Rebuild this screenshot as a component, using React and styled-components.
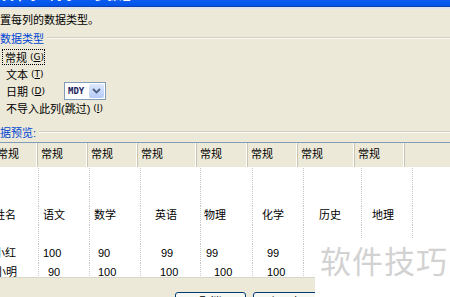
import React from 'react'
import styled, { createGlobalStyle } from 'styled-components'

const GlobalStyle = createGlobalStyle`
  body {
    margin: 0;
    background: #ECE9D8;
    font-family: "Liberation Sans", "Noto Sans CJK SC", sans-serif;
    font-size: 11px;
    color: #000;
  }
`

const Window = styled.div`
  position: relative;
  width: 450px;
  height: 297px;
  overflow: hidden;
  display: flex;
  flex-direction: column;
  background: #ECE9D8;
`

const TitleBar = styled.div`
  height: 6px;
  background: linear-gradient(#0A5CF0, #0152E6);
  border-bottom: 1px solid #0B3FB0;
  overflow: hidden;
  flex-shrink: 0;
`

const TitleText = styled.div`
  margin-top: -10px;
  padding-left: 2px;
  line-height: 13px;
  color: #fff;
  font-weight: bold;
  font-size: 12px;
  white-space: nowrap;
`

const TitleEdge = styled.div`
  height: 2px;
  background: #DCE3EC;
  flex-shrink: 0;
`

const Intro = styled.div`
  height: 16px;
  margin-top: 3px;
  line-height: 16px;
  flex-shrink: 0;
`

const GroupHead = styled.div`
  display: flex;
  align-items: center;
  gap: 3px;
  height: 14px;
  margin-top: ${props => props.top || 0}px;
  color: #0046D5;
  flex-shrink: 0;
`

const Etch = styled.div`
  flex: 1;
  height: 0;
  border-top: 1px solid #D0D0BF;
  border-bottom: 1px solid #FAF9F3;
`

const Options = styled.div`
  display: flex;
  flex-direction: column;
  padding-top: 4px;
  padding-left: 2px;
  flex-shrink: 0;
`

const Option = styled.div`
  display: flex;
  align-items: center;
  box-sizing: border-box;
  height: 16px;
  padding-left: ${props => props.focus ? 2 : 3}px;
  width: ${props => props.focus ? '43px' : 'auto'};
  border: ${props => props.focus ? '1px dotted #000' : '1px solid transparent'};
  margin-bottom: 1px;
`

const Label = styled.span`
  display: inline-flex;
  align-items: center;
  width: ${props => props.w ? props.w + 'px' : 'auto'};
`

const Key = styled.span`
  font-family: "DejaVu Sans", sans-serif;
  font-size: 9px;
  margin-left: 3px;
`

const Underlined = styled.span`
  text-decoration: underline;
  text-underline-offset: 1px;
`

const Select = styled.div`
  display: flex;
  align-items: center;
  width: 40px;
  height: 16px;
  background: #fff;
  border: 1px solid #7F9DB9;
  flex-shrink: 0;
`

const SelectValue = styled.span`
  flex: 1;
  padding-left: 3px;
  font-family: "DejaVu Sans Mono", monospace;
  font-weight: bold;
  font-size: 9px;
  color: #1C1C5C;
`

const SelectButton = styled.div`
  width: 15px;
  height: 14px;
  margin-right: 1px;
  border-radius: 2px;
  background: linear-gradient(#DCE7FD, #B6CBF8);
  display: flex;
  align-items: center;
  justify-content: center;
`

const Preview = styled.div`
  flex: 1;
  margin-top: 3px;
  border-top: 1px solid #7F9DB9;
  background: #fff;
  display: flex;
  flex-direction: column;
  overflow: hidden;
`

const HeadRow = styled.div`
  display: flex;
  height: 24px;
  background: #ECE9D8;
  flex-shrink: 0;
`

const HeadCell = styled.div`
  width: ${props => props.w}px;
  flex-shrink: 0;
  padding-left: 3px;
  line-height: 22px;
  box-sizing: border-box;
  border-right: 1px solid #C7C5B2;
  box-shadow: inset -1px 0 0 #fff;
  white-space: nowrap;
`

const DataBody = styled.div`
  display: flex;
  flex-direction: column;
  padding-top: 1px;
`

const DataRow = styled.div`
  display: flex;
  height: 19px;
  flex-shrink: 0;
`

const DataCell = styled.div`
  width: ${props => props.w}px;
  flex-shrink: 0;
  box-sizing: border-box;
  line-height: 19px;
  white-space: nowrap;
  border-right: 1px dotted #C8C8C8;
`

const Footer = styled.div`
  height: 20px;
  width: 315px;
  background: #ECE9D8;
  border-top: 1px solid #D8D6C6;
  display: flex;
  align-items: flex-start;
  padding-top: 14px;
  padding-left: 175px;
  box-sizing: border-box;
  gap: 7px;
  flex-shrink: 0;
`

const Button = styled.div`
  width: ${props => props.w}px;
  height: 20px;
  border: 1px solid #003C74;
  border-radius: 3px;
  background: #F7F7F3;
  text-align: center;
  line-height: 18px;
  flex-shrink: 0;
`

const Watermark = styled.div`
  position: absolute;
  left: 315px;
  top: 238px;
  width: 135px;
  height: 59px;
  background: #fff;
  color: #D2D2D2;
  font-family: "Noto Sans CJK SC", sans-serif;
  font-size: 31px;
  line-height: 44px;
  padding-left: 5px;
  box-sizing: border-box;
  letter-spacing: 1px;
`

// column widths in px, first column starts left of the window edge
const COLS = [38, 50, 50, 59, 51, 50, 57, 50, 60]
const FIRST_SHIFT = -6

const ROWS = [
  [],
  [],
  [['姓名', 0], ['语文', 4], ['数学', 4], ['英语', 14], ['物理', 3], ['化学', 9], ['历史', 15], ['地理', 10]],
  [],
  [['小红', 0], ['100', 4], ['90', 8], ['99', 20], ['99', 5], ['99', 14]],
  [['小明', 1], ['90', 9], ['100', 8], ['100', 19], ['100', 13], ['100', 14]],
]

function Chevron() {
  return (
    <svg width="9" height="6" viewBox="0 0 9 6">
      <path d="M1 1 L4.5 4.5 L8 1" stroke="#4D6185" strokeWidth="1.8" fill="none" />
    </svg>
  )
}

function Hotkey({ k }) {
  return <Key>(<Underlined>{k}</Underlined>)</Key>
}

export default function App() {
  return (
    <Window>
      <GlobalStyle />
      <TitleBar>
        <TitleText>文本导入向导 - 3 步骤之 3</TitleText>
      </TitleBar>
      <TitleEdge />
      <Intro>置每列的数据类型。</Intro>
      <GroupHead top={3}>
        数据类型
        <Etch />
      </GroupHead>
      <Options>
        <Option focus>常规<Hotkey k="G" /></Option>
        <Option>文本<Hotkey k="T" /></Option>
        <Option>
          <Label w={58}>日期<Hotkey k="D" /></Label>
          <Select>
            <SelectValue>MDY</SelectValue>
            <SelectButton><Chevron /></SelectButton>
          </Select>
        </Option>
        <Option>不导入此列(跳过)<Hotkey k="I" /></Option>
      </Options>
      <GroupHead top={8}>
        据预览:
        <Etch />
      </GroupHead>
      <Preview>
        <HeadRow style={{ marginLeft: FIRST_SHIFT }}>
          {COLS.map((w, i) => (
            <HeadCell key={i} w={i === 0 ? w - FIRST_SHIFT : w}>{i < 8 ? '常规' : ''}</HeadCell>
          ))}
        </HeadRow>
        <DataBody>
          {ROWS.map((row, r) => (
            <DataRow key={r} style={{ marginLeft: FIRST_SHIFT }}>
              {COLS.map((w, i) => (
                <DataCell key={i} w={(i === 0 ? w - FIRST_SHIFT : w) + 1} style={{ paddingLeft: row[i] ? row[i][1] : 0 }}>
                  {row[i] ? row[i][0] : ''}
                </DataCell>
              ))}
            </DataRow>
          ))}
        </DataBody>
      </Preview>
      <Footer>
        <Button w={69}>取消</Button>
        <Button w={66}>&lt; 上一步(B)</Button>
      </Footer>
      <Watermark>软件技巧</Watermark>
    </Window>
  )
}
